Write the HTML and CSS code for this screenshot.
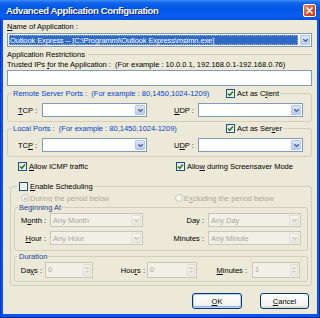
FILE: index.html
```html
<!DOCTYPE html>
<html lang="en">

<head>
  <meta charset="UTF-8">
  <meta name="viewport" content="width=device-width, initial-scale=1.0">
  <title>Advanced Application Configuration</title>
  <link rel="stylesheet" href="styles.css">
</head>

<body>
  <div class="window">
    <div class="titlebar">
      <span class="title">Advanced Application Configuration</span>
      <span class="close">
        <svg width="13" height="13" viewBox="0 0 13 13"><path d="M4 4 L9 9 M9 4 L4 9" stroke="#fff" stroke-width="1.7" stroke-linecap="round"/></svg>
      </span>
    </div>

    <div class="client">
      <div class="line-label first"><u>N</u>ame of Application :</div>
      <div class="combo name-combo">
        <span class="combo-text"><span class="sel"><span>Outlook Express -- [C:\Programmi\Outlook Express\msimn.exe]</span></span></span>
        <span class="drop"><svg width="7" height="7" viewBox="0 0 8 8"><path d="M1.5 2.5 L4 5 L6.5 2.5" stroke="#4d6185" stroke-width="1.6" fill="none"/></svg></span>
      </div>

      <div class="separator"><span>Application Restrictions</span><i></i></div>
      <div class="line-label">Trusted IPs <u>f</u>or the Application :&nbsp; (For example : 10.0.0.1, 192.168.0.1-192.168.0.76)</div>
      <div class="textbox"></div>

      <div class="group ports">
        <div class="group-head">
          <div class="head-fill">
            <span class="head-text blue">Remote Server Ports :&nbsp; (For example : 80,1450,1024-1209)</span>
            <span class="check"><span class="box"><svg width="7" height="7" viewBox="0 0 7 7"><path d="M1 3.5 L2.8 5.3 L6 1.6" stroke="#1f7a1f" stroke-width="1.5" fill="none"/></svg></span><span>Act as C<u>l</u>ient</span></span>
          </div>
        </div>
        <div class="port-row">
          <span class="port-label"><u>T</u>CP :</span>
          <div class="combo port-combo"><span class="combo-text"></span><span class="drop"><svg width="7" height="7" viewBox="0 0 8 8"><path d="M1.5 2.5 L4 5 L6.5 2.5" stroke="#4d6185" stroke-width="1.6" fill="none"/></svg></span></div>
          <span class="port-label udp"><u>U</u>DP :</span>
          <div class="combo port-combo"><span class="combo-text"></span><span class="drop"><svg width="7" height="7" viewBox="0 0 8 8"><path d="M1.5 2.5 L4 5 L6.5 2.5" stroke="#4d6185" stroke-width="1.6" fill="none"/></svg></span></div>
        </div>
      </div>

      <div class="group ports local">
        <div class="group-head">
          <div class="head-fill">
            <span class="head-text blue">Local Ports :&nbsp; (For example : 80,1450,1024-1209)</span>
            <span class="check"><span class="box"><svg width="7" height="7" viewBox="0 0 7 7"><path d="M1 3.5 L2.8 5.3 L6 1.6" stroke="#1f7a1f" stroke-width="1.5" fill="none"/></svg></span><span>Act as Ser<u>v</u>er</span></span>
          </div>
        </div>
        <div class="port-row">
          <span class="port-label">TC<u>P</u> :</span>
          <div class="combo port-combo"><span class="combo-text"></span><span class="drop"><svg width="7" height="7" viewBox="0 0 8 8"><path d="M1.5 2.5 L4 5 L6.5 2.5" stroke="#4d6185" stroke-width="1.6" fill="none"/></svg></span></div>
          <span class="port-label udp">U<u>D</u>P :</span>
          <div class="combo port-combo"><span class="combo-text"></span><span class="drop"><svg width="7" height="7" viewBox="0 0 8 8"><path d="M1.5 2.5 L4 5 L6.5 2.5" stroke="#4d6185" stroke-width="1.6" fill="none"/></svg></span></div>
        </div>
      </div>

      <div class="check-row">
        <span class="check wide"><span class="box"><svg width="7" height="7" viewBox="0 0 7 7"><path d="M1 3.5 L2.8 5.3 L6 1.6" stroke="#1f7a1f" stroke-width="1.5" fill="none"/></svg></span><span><u>A</u>llow ICMP traffic</span></span>
        <span class="check"><span class="box"><svg width="7" height="7" viewBox="0 0 7 7"><path d="M1 3.5 L2.8 5.3 L6 1.6" stroke="#1f7a1f" stroke-width="1.5" fill="none"/></svg></span><span>Allo<u>w</u> during Screensaver Mode</span></span>
      </div>

      <div class="group schedule">
        <div class="group-head">
          <div class="head-fill sched-fill">
            <span class="check"><span class="box"></span><span><u>E</u>nable Scheduling</span></span>
          </div>
        </div>
        <div class="radio-row">
          <span class="radio-item wide"><span class="radio on"></span><span>During the period below</span></span>
          <span class="radio-item"><span class="radio"></span><span>E<u>x</u>cluding the period below</span></span>
        </div>

        <div class="group sub begin">
          <div class="group-head">
            <div class="head-fill sub-fill"><span class="navy">Beginning At</span></div>
          </div>
          <div class="sched-row">
            <span class="col1">M<u>o</u>nth :</span>
            <div class="combo off sched-combo"><span class="combo-text">Any Month</span><span class="drop"><svg width="7" height="7" viewBox="0 0 8 8"><path d="M1.5 2.5 L4 5 L6.5 2.5" stroke="#c9c7ba" stroke-width="1.6" fill="none"/></svg></span></div>
            <span class="col2">Day :</span>
            <div class="combo off sched-combo"><span class="combo-text">Any Day</span><span class="drop"><svg width="7" height="7" viewBox="0 0 8 8"><path d="M1.5 2.5 L4 5 L6.5 2.5" stroke="#c9c7ba" stroke-width="1.6" fill="none"/></svg></span></div>
          </div>
          <div class="sched-row second">
            <span class="col1"><u>H</u>our :</span>
            <div class="combo off sched-combo"><span class="combo-text">Any Hour</span><span class="drop"><svg width="7" height="7" viewBox="0 0 8 8"><path d="M1.5 2.5 L4 5 L6.5 2.5" stroke="#c9c7ba" stroke-width="1.6" fill="none"/></svg></span></div>
            <span class="col2">Minutes :</span>
            <div class="combo off sched-combo"><span class="combo-text">Any Minute</span><span class="drop"><svg width="7" height="7" viewBox="0 0 8 8"><path d="M1.5 2.5 L4 5 L6.5 2.5" stroke="#c9c7ba" stroke-width="1.6" fill="none"/></svg></span></div>
          </div>
        </div>

        <div class="group sub duration">
          <div class="group-head">
            <div class="head-fill sub-fill"><span class="navy">Duration</span></div>
          </div>
          <div class="spin-row">
            <span class="days-label">Da<u>y</u>s :</span>
            <div class="spin days"><span class="spin-val">0</span><span class="spin-btn"><i class="up"></i><i class="down"></i></span></div>
            <span class="hours-label">Hou<u>r</u>s :</span>
            <div class="spin hours"><span class="spin-val">0</span><span class="spin-btn"><i class="up"></i><i class="down"></i></span></div>
            <span class="mins-label"><u>M</u>inutes :</span>
            <div class="spin mins"><span class="spin-val">1</span><span class="spin-btn"><i class="up"></i><i class="down"></i></span></div>
          </div>
        </div>
      </div>

      <div class="buttons">
        <div class="btn default"><span><u>O</u>K</span></div>
        <div class="btn"><span><u>C</u>ancel</span></div>
      </div>
    </div>
  </div>
</body>

</html>
```

FILE: styles.css
```css
html,body {
  margin: 0;
  padding: 0;
  background: #fff;
}

*,
*:before,
*:after {
  box-sizing: border-box;
}

.window {
  width: 320px;
  height: 318px;
  display: flex;
  flex-direction: column;
  background: #0058ee;
  box-shadow: inset 1px 0 #0831d9, inset -1px 0 #001ea0, inset 0 -1px #001ea0;
  font-family: "Liberation Sans", Arial, sans-serif;
  font-size: 7.5px;
  color: #000;
}

.titlebar {
  height: 20px;
  display: flex;
  align-items: center;
  padding: 0 4px 0 6px;
  background: linear-gradient(to bottom, #3d8cf8 0, #1064e8 3px, #0055e5 9px, #0860f0 16px, #0150d8 20px);
}

.title {
  color: #fff;
  font-weight: bold;
  font-size: 9.5px;
  letter-spacing: -0.35px;
  text-shadow: 1px 1px #0a1883;
}

.close {
  margin-left: auto;
  width: 13px;
  height: 13px;
  border: 1px solid #fff;
  border-radius: 2px;
  background: linear-gradient(135deg, #e98a6c, #d9512b 55%, #c23a18);
  display: flex;
  align-items: center;
  justify-content: center;
}
.close svg {
  display: block;
  margin: -1px;
}

.client {
  flex: 1;
  margin: 0 3px 4px;
  background: #ece9d8;
  padding: 0 5px 0 4px;
  display: flex;
  flex-direction: column;
}

u {
  text-decoration: underline;
  text-underline-offset: 1px;
}

.line-label {
  height: 11px;
  line-height: 11px;
  white-space: nowrap;
}
.line-label.first {
  margin-top: 1px;
}

/* combo boxes */
.combo {
  display: flex;
  height: 14px;
  border: 1px solid #7f9db9;
  background: #fff;
}
.combo-text {
  flex: 1;
  display: flex;
  align-items: center;
  padding: 1px 2px;
  white-space: nowrap;
  overflow: hidden;
}
.drop {
  width: 10px;
  margin: 1px;
  border: 1px solid #b3c6f1;
  border-radius: 1px;
  background: linear-gradient(#dde7fc, #b7caf5);
  display: flex;
  align-items: center;
  justify-content: center;
}
.drop svg {
  display: block;
}

.name-combo {
  margin-top: 1px;
}
.name-combo .combo-text {
  padding: 1px;
}
.sel {
  flex: 1;
  align-self: stretch;
  display: flex;
  align-items: center;
  padding-left: 1px;
  background: #316ac5;
  color: #fff;
  letter-spacing: -0.1px;
  outline: 1px dotted #9ab6e6;
  outline-offset: -1px;
}

.combo.off {
  border-color: #c9c7ba;
  background: #f1efe6;
  color: #aca899;
}
.combo.off .drop {
  border-color: #e2e0d6;
  background: linear-gradient(#f6f5ef, #e9e7de);
}

.separator {
  display: flex;
  align-items: center;
  height: 10px;
  margin-top: 2px;
  white-space: nowrap;
}
.separator i {
  flex: 1;
  border-top: 1px solid #d0d0bf;
  margin-left: 3px;
}

.textbox {
  height: 16px;
  border: 1px solid #7f9db9;
  background: #fff;
}

/* group boxes */
.group {
  border: 1px solid #d0d0bf;
  border-radius: 3px;
  display: flex;
  flex-direction: column;
}
.group-head {
  display: flex;
  height: 11px;
  line-height: 11px;
  margin-top: -6px;
  white-space: nowrap;
}
.head-fill {
  display: flex;
  align-items: center;
  background: #ece9d8;
  margin-left: 4px;
  padding: 0 1px;
}
.blue {
  color: #0046d5;
}
.navy {
  color: #1b3f94;
}

.ports {
  margin-top: 7px;
  padding-bottom: 4px;
}
.ports.local {
  margin-top: 6px;
}
.head-text {
  width: 213px;
}

.port-row {
  display: flex;
  align-items: center;
  margin-top: 4px;
  height: 14px;
}
.port-label {
  width: 24px;
  margin-left: 10px;
  white-space: nowrap;
}
.port-label.udp {
  margin-left: 27px;
}
.port-combo {
  width: 105px;
}

/* check boxes and radios */
.check {
  display: flex;
  align-items: center;
  white-space: nowrap;
}
.box {
  width: 9px;
  height: 9px;
  margin-right: 2px;
  border: 1px solid #1c5180;
  background: linear-gradient(135deg, #e3e2da, #fff);
  display: flex;
  align-items: center;
  justify-content: center;
}
.box svg {
  display: block;
}

.check-row {
  display: flex;
  align-items: center;
  height: 10px;
  margin: 4px 0 0 11px;
}
.check.wide {
  width: 158px;
}

.schedule {
  margin: 15px 0 0 3px;
  padding: 0 3px 3px;
}
.sched-fill {
  margin-left: 4px;
}

.radio-row {
  display: flex;
  align-items: center;
  height: 10px;
  margin: 1px 0 0 7px;
  color: #aca899;
  white-space: nowrap;
}
.radio-item {
  display: flex;
  align-items: center;
}
.radio-item.wide {
  width: 154px;
}
.radio {
  width: 8px;
  height: 8px;
  margin-right: 1px;
  border-radius: 50%;
  border: 1px solid #cac8bb;
  background: #f4f3ee;
  display: flex;
  align-items: center;
  justify-content: center;
}
.radio.on:after {
  content: "";
  width: 3px;
  height: 3px;
  border-radius: 50%;
  background: #cac8bb;
}

.sub {
  margin-top: 4px;
}
.sub-fill {
  margin-left: 3px;
}
.begin {
  padding-bottom: 5px;
}

.sched-row {
  display: flex;
  align-items: center;
  height: 14px;
  white-space: nowrap;
}
.sched-row.second {
  margin-top: 4px;
}
.col1 {
  width: 35px;
  padding-right: 4px;
  text-align: right;
}
.col2 {
  width: 65px;
  padding-right: 4px;
  text-align: right;
}
.sched-combo {
  width: 93px;
}

.duration {
  margin-top: 5px;
  padding-bottom: 3px;
}
.spin-row {
  display: flex;
  align-items: center;
  height: 16px;
  white-space: nowrap;
}
.days-label {
  width: 30px;
  padding-right: 3px;
  text-align: right;
}
.hours-label {
  width: 54px;
  padding-right: 2px;
  text-align: right;
}
.mins-label {
  width: 55px;
  padding-right: 5px;
  text-align: right;
}
.spin {
  display: flex;
  height: 16px;
  border: 1px solid #c9c7ba;
  background: #f1efe6;
  color: #aca899;
}
.spin.days,
.spin.mins {
  width: 48px;
}
.spin.hours {
  width: 50px;
}
.spin-val {
  flex: 1;
  padding: 1px 2px;
  line-height: 11px;
}
.spin-btn {
  width: 8px;
  margin: 1px;
  display: flex;
  flex-direction: column;
  justify-content: space-evenly;
  align-items: center;
  background: #eeece3;
  border: 1px solid #e2e0d6;
}
.spin-btn i {
  width: 0;
  height: 0;
  border-left: 2px solid transparent;
  border-right: 2px solid transparent;
}
.spin-btn .up {
  border-bottom: 2px solid #c9c7ba;
}
.spin-btn .down {
  border-top: 2px solid #c9c7ba;
}

/* buttons */
.buttons {
  display: flex;
  justify-content: flex-end;
  gap: 18px;
  margin-top: 7px;
  padding-right: 3px;
}
.btn {
  width: 49px;
  height: 16px;
  border: 1px solid #003c74;
  border-radius: 3px;
  background: linear-gradient(#fff, #f3f3ef 80%, #d6d0c5);
  display: flex;
  align-items: center;
  justify-content: center;
}
.btn.default {
  width: 50px;
  box-shadow: inset 0 0 0 1px #b9d1fa, inset 0 -1px 0 1px #8fb1ee;
}
```
